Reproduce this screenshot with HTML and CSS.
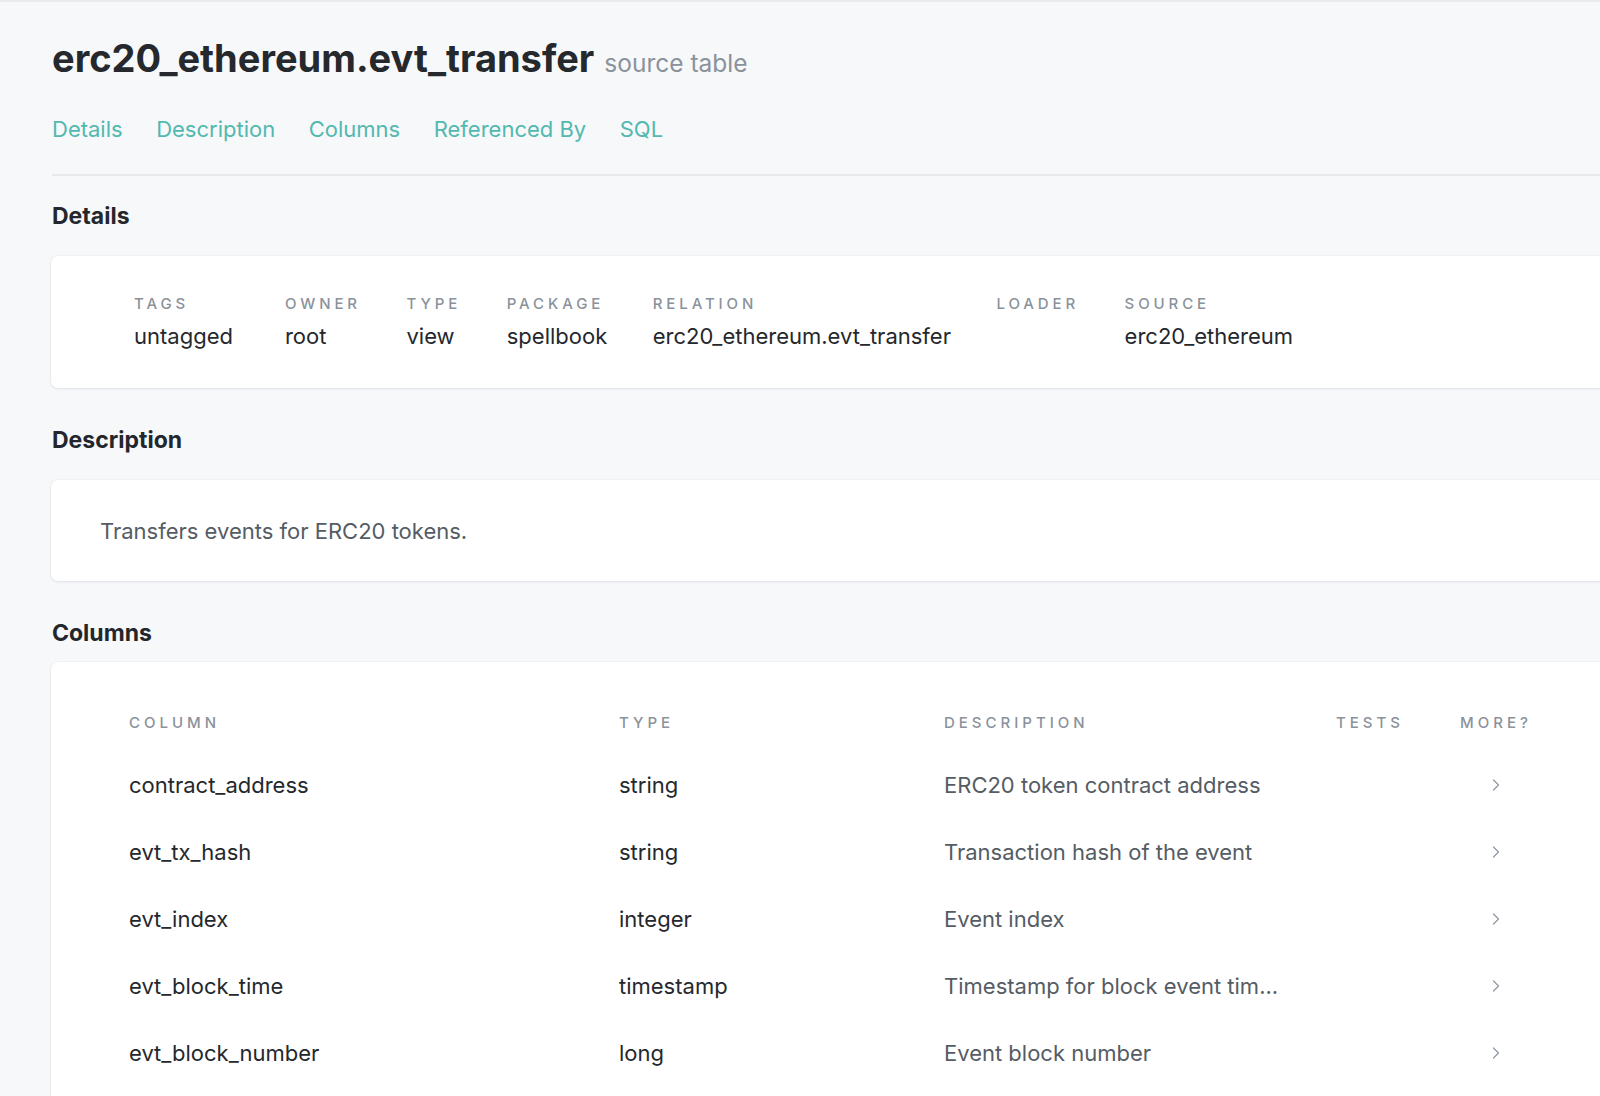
FILE: index.html
```html
<!DOCTYPE html>
<html lang="en">
<head>
<meta charset="utf-8">
<title>erc20_ethereum.evt_transfer</title>
<link rel="stylesheet" href="styles.css">
</head>
<body>
<div class="page">
  <header class="header">
    <h1 class="title">erc20_ethereum.evt_transfer <small class="subtitle">source table</small></h1>
    <nav class="tabs">
      <a class="tab" href="#details">Details</a>
      <a class="tab" href="#description">Description</a>
      <a class="tab" href="#columns">Columns</a>
      <a class="tab" href="#referenced">Referenced By</a>
      <a class="tab" href="#sql">SQL</a>
    </nav>
  </header>

  <section class="section" id="details">
    <h2 class="section-title">Details</h2>
    <div class="card details-card">
      <dl class="detail detail-first">
        <dt class="detail-label">Tags</dt>
        <dd class="detail-value">untagged</dd>
      </dl>
      <dl class="detail">
        <dt class="detail-label">Owner</dt>
        <dd class="detail-value">root</dd>
      </dl>
      <dl class="detail">
        <dt class="detail-label">Type</dt>
        <dd class="detail-value">view</dd>
      </dl>
      <dl class="detail">
        <dt class="detail-label">Package</dt>
        <dd class="detail-value">spellbook</dd>
      </dl>
      <dl class="detail">
        <dt class="detail-label">Relation</dt>
        <dd class="detail-value">erc20_ethereum.evt_transfer</dd>
      </dl>
      <dl class="detail">
        <dt class="detail-label">Loader</dt>
        <dd class="detail-value">&nbsp;</dd>
      </dl>
      <dl class="detail">
        <dt class="detail-label">Source</dt>
        <dd class="detail-value">erc20_ethereum</dd>
      </dl>
    </div>
  </section>

  <section class="section" id="description">
    <h2 class="section-title">Description</h2>
    <div class="card desc-card">
      <p class="desc-text">Transfers events for ERC20 tokens.</p>
    </div>
  </section>

  <section class="section" id="columns">
    <h2 class="section-title">Columns</h2>
    <div class="card columns-card">
      <div class="col-row col-head">
        <div>Column</div>
        <div>Type</div>
        <div>Description</div>
        <div>Tests</div>
        <div>More?</div>
      </div>
      <div class="col-row">
        <div class="c-name">contract_address</div>
        <div class="c-type">string</div>
        <div class="c-desc">ERC20 token contract address</div>
        <div class="c-tests"></div>
        <div class="c-more"><svg class="chev" viewBox="0 0 8 14" width="8" height="14"><path d="M1.5 2l5 5-5 5" fill="none" stroke="currentColor" stroke-width="1.2" stroke-linecap="round" stroke-linejoin="round"/></svg></div>
      </div>
      <div class="col-row">
        <div class="c-name">evt_tx_hash</div>
        <div class="c-type">string</div>
        <div class="c-desc">Transaction hash of the event</div>
        <div class="c-tests"></div>
        <div class="c-more"><svg class="chev" viewBox="0 0 8 14" width="8" height="14"><path d="M1.5 2l5 5-5 5" fill="none" stroke="currentColor" stroke-width="1.2" stroke-linecap="round" stroke-linejoin="round"/></svg></div>
      </div>
      <div class="col-row">
        <div class="c-name">evt_index</div>
        <div class="c-type">integer</div>
        <div class="c-desc">Event index</div>
        <div class="c-tests"></div>
        <div class="c-more"><svg class="chev" viewBox="0 0 8 14" width="8" height="14"><path d="M1.5 2l5 5-5 5" fill="none" stroke="currentColor" stroke-width="1.2" stroke-linecap="round" stroke-linejoin="round"/></svg></div>
      </div>
      <div class="col-row">
        <div class="c-name">evt_block_time</div>
        <div class="c-type">timestamp</div>
        <div class="c-desc">Timestamp for block event tim...</div>
        <div class="c-tests"></div>
        <div class="c-more"><svg class="chev" viewBox="0 0 8 14" width="8" height="14"><path d="M1.5 2l5 5-5 5" fill="none" stroke="currentColor" stroke-width="1.2" stroke-linecap="round" stroke-linejoin="round"/></svg></div>
      </div>
      <div class="col-row">
        <div class="c-name">evt_block_number</div>
        <div class="c-type">long</div>
        <div class="c-desc">Event block number</div>
        <div class="c-tests"></div>
        <div class="c-more"><svg class="chev" viewBox="0 0 8 14" width="8" height="14"><path d="M1.5 2l5 5-5 5" fill="none" stroke="currentColor" stroke-width="1.2" stroke-linecap="round" stroke-linejoin="round"/></svg></div>
      </div>
    </div>
  </section>
</div>
</body>
</html>
```

FILE: styles.css
```css
* { box-sizing: border-box; }

html, body {
  margin: 0;
  padding: 0;
  height: 100%;
  overflow: hidden;
}

body {
  background: #f7f8fa;
  font-family: Inter, "Noto Sans", "Liberation Sans", sans-serif;
  color: #24282c;
  border-top: 2px solid #e9ebee;
}

.page {
  padding-left: 52px;
  width: 1700px;
}

.header {
  border-bottom: 2px solid #e7e9ec;
  padding-top: 31px;
  padding-bottom: 30px;
}

.title {
  margin: 0;
  font-size: 38px;
  line-height: 50px;
  font-weight: 700;
  letter-spacing: 0;
  color: #25282c;
}

.subtitle {
  font-size: 24.5px;
  font-weight: 400;
  color: #8a929b;
  margin-left: 1px;
}

.tabs {
  display: flex;
  gap: 33.5px;
  margin-top: 26px;
}

.tab {
  font-size: 22px;
  line-height: 30px;
  color: #52b8b0;
  text-decoration: none;
}

.section-title {
  margin: 0;
  font-size: 23px;
  line-height: 30px;
  font-weight: 700;
  color: #23272b;
}

#details { padding-top: 25px; }
#description { padding-top: 37px; }
#columns { padding-top: 37px; }

.card {
  background: #ffffff;
  border-radius: 7px;
  box-shadow: 0 1px 3px rgba(20, 30, 50, 0.08), 0 0 0 1px rgba(20, 30, 50, 0.025);
  margin-left: -1px;
}

.details-card {
  margin-top: 25px;
  height: 132px;
  display: flex;
  padding: 39px 0 0 83px;
}

.detail {
  margin: 0 45.5px 0 0;
}

.detail-first {
  margin-right: 52px;
}

.detail-label {
  font-size: 15px;
  line-height: 18px;
  letter-spacing: 3.9px;
  text-transform: uppercase;
  color: #8a929b;
  font-weight: 500;
}

.detail-value {
  margin: 0;
  margin-top: 8px;
  font-size: 22px;
  line-height: 30px;
  color: #24282c;
}

.desc-card {
  margin-top: 25px;
  height: 101px;
  display: flex;
  align-items: center;
  padding-left: 49px;
}

.desc-text {
  margin: 0;
  font-size: 22px;
  line-height: 30px;
  color: #555c64;
}

.columns-card {
  margin-top: 14px;
  height: 460px;
  padding: 46px 0 0 78px;
}

.col-row {
  display: grid;
  grid-template-columns: 490px 325px 392px 124px 80px;
  align-items: center;
  height: 66.8px;
  font-size: 22px;
  color: #24282c;
}

.col-head {
  height: 29px;
  margin-bottom: 15px;
  font-size: 15px;
  letter-spacing: 4px;
  text-transform: uppercase;
  color: #8a929b;
  font-weight: 500;
}

.c-desc {
  color: #555c64;
}

.c-more {
  color: #9097a0;
  padding-left: 32px;
  display: flex;
  align-items: center;
}

.chev { display: block; }
```
